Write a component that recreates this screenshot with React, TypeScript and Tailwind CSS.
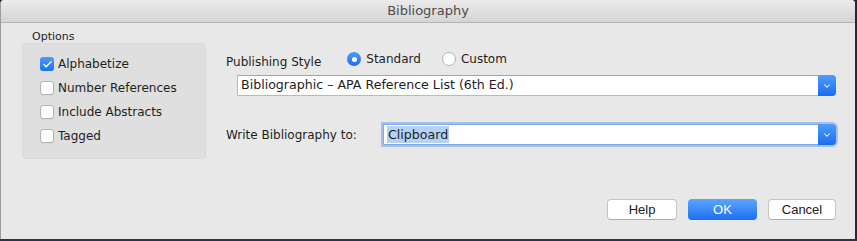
import { Check, ChevronDown } from "lucide-react";

const labelFont = "font-['DejaVu_Sans','Noto_Sans',sans-serif]";
const buttonFont = "font-['Liberation_Sans',Arial,sans-serif]";

function Checkbox({ checked, label }: { checked?: boolean; label: string }) {
  return (
    <div className="flex h-[14px] items-center gap-[4px]">
      {checked ? (
        <span className="flex h-[14px] w-[14px] items-center justify-center rounded-[3px] bg-gradient-to-b from-[#4b9bf9] to-[#1e6ff1]">
          <Check size={11} strokeWidth={3} className="text-white" />
        </span>
      ) : (
        <span className="h-[14px] w-[14px] rounded-[3px] border border-[#b3b3b3] bg-white shadow-[0_1px_0_rgba(0,0,0,0.04)]" />
      )}
      <span className="text-[12px] leading-none text-[#1e1e1e]">{label}</span>
    </div>
  );
}

function Radio({ checked, label }: { checked?: boolean; label: string }) {
  return (
    <div className="flex items-center gap-[5px]">
      {checked ? (
        <span className="flex h-[14px] w-[14px] items-center justify-center rounded-full bg-gradient-to-b from-[#4b9bf9] to-[#1e6ff1]">
          <span className="h-[5px] w-[5px] rounded-full bg-white" />
        </span>
      ) : (
        <span className="h-[14px] w-[14px] rounded-full border border-[#b3b3b3] bg-white" />
      )}
      <span className="text-[12px] leading-none text-[#1e1e1e]">{label}</span>
    </div>
  );
}

function SelectBox({ children, focused }: { children: React.ReactNode; focused?: boolean }) {
  return (
    <div
      className={[
        "flex h-[21px] flex-1 items-stretch rounded-r-[4px] bg-white",
        focused
          ? "border border-[#7fa9e6] shadow-[0_0_0_2px_rgba(112,160,232,0.55)]"
          : "border border-[#b9b9b9] border-t-[#a6a6a6]",
      ].join(" ")}
    >
      <div className="flex flex-1 items-center pl-[3px] text-[12.6px] text-[#1e1e1e]">{children}</div>
      <div className="-my-px -mr-px flex w-[18px] items-center justify-center rounded-r-[4px] bg-gradient-to-b from-[#4d9df9] to-[#1a6cf0]">
        <ChevronDown size={10} strokeWidth={2.5} className="text-white" />
      </div>
    </div>
  );
}

export default function App() {
  return (
    <div className={`flex h-[241px] w-[857px] flex-col overflow-hidden bg-[#1f2940] ${labelFont}`}>
      <div className="mr-[2px] flex flex-1 flex-col overflow-hidden rounded-t-[4px] border-l border-[#9d9d9d] bg-[#e8e8e8]">
        {/* title bar */}
        <div className="flex h-[23px] items-center justify-center border-b border-[#b4b4b4] bg-gradient-to-b from-[#ebebeb] to-[#d5d5d5] text-[13px] text-[#4c4c4c]">
          Bibliography
        </div>

        <div className="flex flex-1 flex-col">
          <div className="flex">
            {/* options group */}
            <div className="ml-[21px] w-[184px]">
              <div className="pl-[10px] pt-[7px] text-[11px] leading-[13px] text-[#1e1e1e]">Options</div>
              <div className="flex h-[116px] flex-col gap-[10px] rounded-[4px] border border-[#dadada] bg-[#dfdfdf] pl-[17px] pt-[13px]">
                <Checkbox checked label="Alphabetize" />
                <Checkbox label="Number References" />
                <Checkbox label="Include Abstracts" />
                <Checkbox label="Tagged" />
              </div>
            </div>

            {/* publishing */}
            <div className="ml-[20px] mr-[19px] flex flex-1 flex-col pt-[27px]">
              <div className="flex items-center">
                <span className="mt-[6px] text-[12px] leading-none text-[#1e1e1e]">Publishing Style</span>
                <div className="ml-[26px] flex items-center gap-[21px]">
                  <Radio checked label="Standard" />
                  <Radio label="Custom" />
                </div>
              </div>
              <div className="ml-[11px] mt-[7px] flex">
                <SelectBox>Bibliographic – APA Reference List (6th Ed.)</SelectBox>
              </div>
              <div className="mt-[28px] flex items-center">
                <span className="w-[157px] text-[12px] leading-none text-[#1e1e1e]">Write Bibliography to:</span>
                <SelectBox focused>
                  <span className="bg-[#b3d2f6] px-[1px] leading-[17px]">Clipboard</span>
                </SelectBox>
              </div>
            </div>
          </div>

          {/* buttons */}
          <div className={`mb-[19px] mr-[19px] mt-auto flex justify-end gap-[11px] ${buttonFont}`}>
            <button className="h-[21px] w-[70px] rounded-[4px] border border-[#c4c4c4] border-b-[#adadad] bg-white text-[13px] text-[#222]">
              Help
            </button>
            <button className="h-[21px] w-[69px] rounded-[4px] bg-gradient-to-b from-[#5aa5fa] to-[#1a6ef1] text-[13px] text-white">
              OK
            </button>
            <button className="h-[21px] w-[68px] rounded-[4px] border border-[#c4c4c4] border-b-[#adadad] bg-white text-[13px] text-[#222]">
              Cancel
            </button>
          </div>
        </div>
      </div>
      <div className="h-[2px] bg-[#2b3447]" />
    </div>
  );
}
